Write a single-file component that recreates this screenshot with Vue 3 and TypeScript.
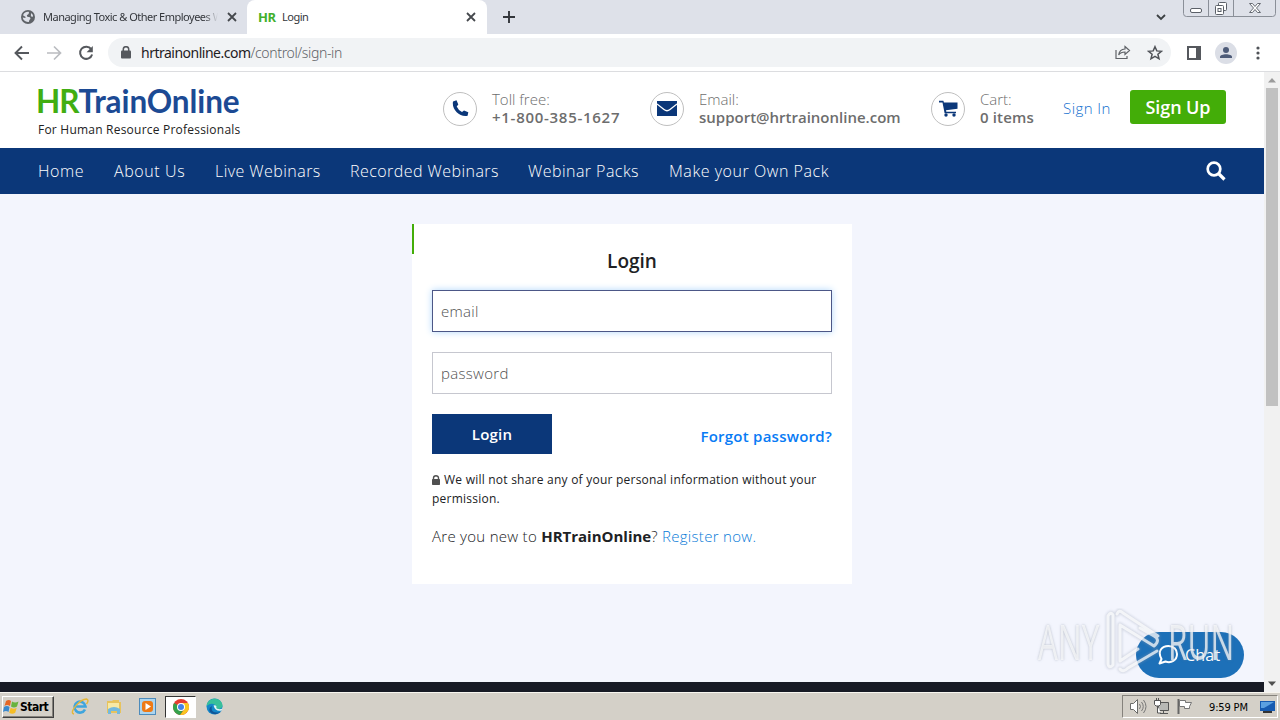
<script setup lang="ts">
const navItems: { label: string; width: string }[] = [
  { label: 'Home', width: 'w-home' },
  { label: 'About Us', width: 'w-about' },
  { label: 'Live Webinars', width: 'w-live' },
  { label: 'Recorded Webinars', width: 'w-recorded' },
  { label: 'Webinar Packs', width: 'w-packs' },
  { label: 'Make your Own Pack', width: 'w-make' },
]
</script>

<template>
  <div class="screen">
    <div class="tabstrip">
      <div class="tab tab-idle">
        <svg class="globe" width="14" height="14" viewBox="0 0 14 14">
          <circle cx="7" cy="7" r="7" fill="#5f6368" />
          <path d="M2 5.2c1.2-2.8 4-3.7 6-3.2L7.6 4 5.8 5.2 6.3 6.8 9 7.2 9.5 8.8 8.4 10l-.6 2C4.3 12.400 2 10 1.700 7.600l2.500.500.500-1zM10 3l2 2-.300 2-1.800-.800z" fill="#dee1e9" />
        </svg>
        <span class="tab-title idle-title">Managing Toxic &amp; Other Employees W</span>
        <svg width="10" height="10" viewBox="0 0 10 10"><path d="M1 1l8 8M9 1L1 9" stroke="#45484d" stroke-width="1.800" /></svg>
      </div>
      <div class="tab tab-active">
        <b class="hr-icon">HR</b>
        <span class="tab-title active-title">Login</span>
        <svg width="10" height="10" viewBox="0 0 10 10"><path d="M1 1l8 8M9 1L1 9" stroke="#45484d" stroke-width="1.800" /></svg>
      </div>
      <svg class="plus" width="12" height="12" viewBox="0 0 12 12"><path d="M6 0v12M0 6h12" stroke="#33363b" stroke-width="1.900" /></svg>
      <svg class="chevron" width="10" height="7" viewBox="0 0 10 7"><path d="M1 1l4 4 4-4" fill="none" stroke="#3c4043" stroke-width="1.800" /></svg>
      <svg class="winctl" width="94" height="18" viewBox="0 0 94 18" fill="none">
        <path d="M.5 0v13.500q0 3 3 3h86q3 0 3-3V0M25.500 0v16M50.500 0v16" stroke="#8a8f98" />
        <rect x="7.500" y="8.500" width="11" height="4" rx="1.500" fill="#fff" stroke="#5b6068" />
        <rect x="35.500" y="2.500" width="8" height="8" rx="1" fill="#fff" stroke="#5b6068" />
        <rect x="32.500" y="5.500" width="8" height="9" rx="1" fill="#fff" stroke="#5b6068" />
        <rect x="35" y="8.500" width="3" height="3" stroke="#5b6068" />
        <path d="M66.500 3.500h3l2.500 3 2.500-3h3l-4 4.500 4 4.500h-3l-2.500-3-2.500 3h-3l4-4.500z" fill="#fff" stroke="#666b73" />
      </svg>
    </div>

    <div class="toolbar">
      <svg width="16" height="16" viewBox="0 0 16 16"><path d="M15 8H2.200M8 1.500L1.500 8 8 14.500" fill="none" stroke="#55585d" stroke-width="1.900" /></svg>
      <svg width="16" height="16" viewBox="0 0 16 16"><path d="M1 8h12.800M8 1.500L14.500 8 8 14.500" fill="none" stroke="#babcc0" stroke-width="1.700" /></svg>
      <svg width="16" height="16" viewBox="0 0 16 16"><path d="M13.200 4.200A6.100 6.100 0 1 0 14.100 9.400" fill="none" stroke="#55585d" stroke-width="2" /><path d="M14.800 1v6.200H8.600z" fill="#55585d" /></svg>
      <div class="omnibox">
        <svg width="10" height="13" viewBox="0 0 10 13"><rect y="4.500" width="10" height="8" rx="1" fill="#55585d" /><path d="M2.300 5V3.200a2.700 2.500 0 0 1 5.400 0V5" fill="none" stroke="#55585d" stroke-width="1.500" /></svg>
        <span class="url"><span class="host">hrtrainonline.com</span>/control/sign-in</span>
        <svg class="share" width="16" height="15" viewBox="0 0 16 15" fill="none" stroke="#606368" stroke-width="1.200"><path d="M1 5v8.500h11V11" /><path d="M10 1.500l4.500 4L10 9.500V7C7 7 5 8 3.700 10 4.200 6 6.500 4.200 10 4z" /></svg>
        <svg width="16" height="16" viewBox="0 0 16 16"><path d="M8 1.700l1.800 4.200 4.600.4-3.500 3 1.100 4.500L8 11.400l-4 2.400 1.100-4.500-3.500-3 4.600-.4z" fill="none" stroke="#505358" stroke-width="1.500" /></svg>
      </div>
      <svg class="panel" width="14" height="14" viewBox="0 0 14 14"><rect x="1" y="1" width="12" height="12" fill="#fff" stroke="#55585d" stroke-width="2" /><path d="M9 1h4v12H9z" fill="#55585d" /></svg>
      <svg class="avatar" width="22" height="22" viewBox="0 0 22 22"><circle cx="11" cy="11" r="11" fill="#dbdee6" /><circle cx="11" cy="8" r="3" fill="#4d5b78" /><path d="M5 16v-1c0-3.600 12-3.600 12 0v1z" fill="#4d5b78" /></svg>
      <svg class="dots" width="4" height="14" viewBox="0 0 4 14" fill="#505358"><circle cx="2" cy="2" r="1.600" /><circle cx="2" cy="7" r="1.600" /><circle cx="2" cy="12" r="1.600" /></svg>
    </div>

    <div class="viewport">
      <div class="page">
        <header class="site-header">
          <div class="brand">
            <div class="wordmark"><span class="green">HR</span>TrainOnline</div>
            <div class="tagline">For Human Resource Professionals</div>
          </div>
          <div class="contact phone">
            <div class="ring"><svg width="17" height="17" viewBox="0 0 17 17"><path d="M1 1.500L4.500.2 6.300 4.500 4.700 6.500Q6.500 10.500 10 12.100l2-1.600 4.300 1.800-.7 3.400C8 17.500-.5 9.500 1 1.500z" fill="#0b3779" /></svg></div>
            <div class="lines"><span class="l-toll">Toll free:</span><b class="b-phone">+1-800-385-1627</b></div>
          </div>
          <div class="contact mail">
            <div class="ring"><svg width="20" height="15" viewBox="0 0 20 15"><path d="M0 0h20v15H0z" fill="#0b3779" /><path d="M0 3l7 5.500q3 2.500 6 0L20 3" fill="none" stroke="#fff" stroke-width="1.300" /></svg></div>
            <div class="lines"><span class="l-email">Email:</span><b class="b-email">support@hrtrainonline.com</b></div>
          </div>
          <div class="contact cart">
            <div class="ring"><svg width="19" height="17" viewBox="0 0 19 17"><path d="M0 .8h4.400l.5 1.700H18.500v6.200L7 10.200l.3 1.500H17v1.600H5.600L3.500 2.500H0z" fill="#0b3779" /><circle cx="7" cy="15" r="1.700" fill="#0b3779" /><circle cx="15" cy="15" r="1.700" fill="#0b3779" /></svg></div>
            <div class="lines"><span class="l-cart">Cart:</span><b class="b-cart">0 items</b></div>
          </div>
          <a class="signin">Sign In</a>
          <button class="signup">Sign Up</button>
        </header>

        <nav class="site-nav">
          <a v-for="item in navItems" :key="item.label" :class="item.width">{{ item.label }}</a>
          <svg class="search" width="20" height="20" viewBox="0 0 20 20" fill="none" stroke="#fff"><circle cx="8" cy="8" r="6.300" stroke-width="2.700" /><path d="M12.500 12.500l6 6" stroke-width="3.200" /></svg>
        </nav>

        <main class="content">
          <form class="card" @submit.prevent>
            <h1>Login</h1>
            <div class="field focused">email</div>
            <div class="field"><span class="ph-password">password</span></div>
            <div class="actions">
              <button class="login" type="submit">Login</button>
              <a class="forgot">Forgot password?</a>
            </div>
            <p class="privacy">
              <svg width="8" height="10" viewBox="0 0 8 10"><rect y="4" width="8" height="6" rx=".7" fill="#505050" /><path d="M1.500 5V3a2.500 2.300 0 0 1 5 0v2" fill="none" stroke="#505050" stroke-width="1.400" /></svg>
              <span class="priv-1">We will not share any of your personal information without your</span><br><span class="priv-2">permission.</span>
            </p>
            <p class="register"><span class="r1">Are you new to </span><b>HRTrainOnline</b><span class="r1">? </span><a>Register now.</a></p>
          </form>
        </main>
        <div class="footer"></div>
      </div>
      <div class="scrollbar">
        <svg width="16" height="16" viewBox="0 0 16 16"><path d="M4 10.500l4-4.500 4 4.500z" fill="#9b9b9b" /></svg>
        <div class="thumb"></div>
        <svg class="sb-down" width="16" height="16" viewBox="0 0 16 16"><path d="M4 5.500h8L8 10z" fill="#505050" /></svg>
      </div>
    </div>

    <div class="chat">
      <svg width="20" height="20" viewBox="0 0 20 20" fill="none" stroke="#fff" stroke-width="2"><path d="M1.500 18.500l2-4.500C-1 6 4 1 10.500 1c5 0 8.500 3.500 8.500 8 0 6.500-6 9.500-11.500 7.500z" stroke-linejoin="round" /></svg>
      <span>Chat</span>
    </div>

    <div class="watermark">
      <span class="any">ANY</span>
      <svg width="62" height="66" viewBox="0 0 62 66" fill="none" stroke-linejoin="round" stroke-linecap="round">
        <g class="mark-halo" stroke="#8f99ac" stroke-opacity=".3" stroke-width="5"><path d="M5 8v48q1 5 5 1V7q-2-4-5 1M14 6q2-5 6-1l35 23M17 17v36l18-12M17 17l34 21q7-6 0-10L37 20M17 61q3 4 8-1l29-17" /></g>
        <g stroke="#fff" stroke-opacity=".72" stroke-width="3"><path d="M5 8v48q1 5 5 1V7q-2-4-5 1M14 6q2-5 6-1l35 23M17 17v36l18-12M17 17l34 21q7-6 0-10L37 20M17 61q3 4 8-1l29-17" /></g>
      </svg>
      <span class="run">RUN</span>
    </div>

    <div class="taskbar">
      <div class="start">
        <svg width="17" height="16" viewBox="0 0 17 16"><path d="M3 2q3-2 5 0L7 7Q4 5 1.500 7z" fill="#e56726" /><path d="M9 2.500q3 2 6.500 0L14 7.500q-3 2-6 0z" fill="#67b33e" /><path d="M1 8q3-2 5.500 0L5.500 13Q3 11 0 13z" fill="#3989ce" /><path d="M7.700 8.700q3 2 6 0l-1.500 5q-3 2-6 0z" fill="#f5bd26" /></svg>
        <b>Start</b>
      </div>
      <svg class="ie" width="18" height="18" viewBox="0 0 18 18" fill="none"><path d="M14 11.500A5.500 5.500 0 1 1 14.500 8.500H5" stroke="#3fa5dd" stroke-width="2.600" /><path d="M3 16C-3 15 9 1 15.500 1q3 1 0 5" stroke="#e5b638" stroke-width="1.400" /></svg>
      <svg class="explorer" width="18" height="18" viewBox="0 0 18 18"><path d="M2 3h5l1-1h6v2h2v11H2z" fill="#e7c35d" /><path d="M3 5h11v7H3z" fill="#f7e9a5" /><path d="M3 11q6-4 12 0v5h-3v-3H6v3H3z" fill="#74b9dd" /></svg>
      <svg class="player" width="17" height="17" viewBox="0 0 17 17"><rect x=".5" y=".5" width="16" height="16" fill="#acd5ef" stroke="#4d8bbb" /><rect x="3" y="3" width="11" height="11" rx="3" fill="#ee7a16" /><path d="M6.500 5v7l5.500-3.500z" fill="#fff" /></svg>
      <div class="task-active">
        <svg width="16" height="16" viewBox="0 0 16 16"><circle cx="8" cy="8" r="8" fill="#e43d30" /><path d="M1.100 4A8 8 0 0 0 7 16l4.500-6.500L8 8z" fill="#34a24c" /><path d="M8 4h6.900A8 8 0 0 1 7.200 16L11.500 10z" fill="#f9c620" /><circle cx="8" cy="8" r="4" fill="#fff" /><circle cx="8" cy="8" r="3" fill="#4383e8" /></svg>
      </div>
      <svg class="edge" width="17" height="17" viewBox="0 0 17 17"><circle cx="8.500" cy="8.500" r="8" fill="#1487c9" /><path d="M.6 8C1-1 15-2 16.500 7c.5 4-5 5-7 3q1.500-2-1-3.500Q5 4.500.6 8z" fill="#38bf9b" /><path d="M6 8q-2 7 6 6.500 2 0 4-1.500Q10 19 4 14q-2-4 2-6z" fill="#115597" /><path d="M7.500 7.500q2-1 3 1-1 2 2 2.500 2 .5 4-.5l-1 2q-6 1.500-8-5z" fill="#e4f6f5" /></svg>
      <div class="tray">
        <svg width="18" height="17" viewBox="0 0 18 17" fill="none"><path d="M1.500 5.500h3l4-4v14l-4-4h-3z" fill="#fff" stroke="#6a6a68" /><path d="M10.500 6q2 2.500 0 5M12.500 4q3.500 4.500 0 9M14.500 2q5 6.500 0 13" stroke="#777" /></svg>
        <svg width="17" height="17" viewBox="0 0 17 17" fill="none"><path d="M5.500 4.500h10v8h-10z" fill="#b7b8b5" stroke="#555" /><path d="M10.500 13v2M7 15.500h8" stroke="#555" /><path d="M1.500 2.500h6v4l-1.500 1.500h-3L1.500 6.500zM3.500 0v3M5.500 0v3M4.500 8v7H8" fill="#fff" stroke="#555" /></svg>
        <svg width="17" height="17" viewBox="0 0 17 17"><path d="M2.500 1v15" stroke="#666" stroke-width="2" /><path d="M3.500 2.500h6v2h6l-2 4v2h-5v-2h-5z" fill="#fff" stroke="#777" /></svg>
        <span class="clock">9:59 PM</span>
        <svg width="15" height="12" viewBox="0 0 15 12"><path d="M0 0h15v10H0z" fill="#175bb1" /><path d="M1 1h13L4 7H1z" fill="#5ba0e1" /><path d="M3 11h9" stroke="#333" stroke-width="2" /></svg>
      </div>
    </div>
  </div>
</template>

<style>
html, body { margin: 0; overflow: hidden; }
</style>

<style scoped>
* { box-sizing: border-box; }
.screen { position: relative; width: 1280px; height: 720px; display: flex; flex-direction: column; overflow: hidden; background: #f3f5fd; font-family: "Open Sans", "Noto Sans", sans-serif; }
svg { display: block; flex-shrink: 0; }
b { font-weight: 600; }
.tabstrip { height: 34px; flex-shrink: 0; background: #dee1e9; display: flex; align-items: center; }
.tab { height: 34px; display: flex; align-items: center; font: 11px/14px "Noto Sans", sans-serif; color: #33363b; }
.tab-idle { width: 247px; padding-left: 21px; }
.tab-title { white-space: nowrap; }
.idle-title { width: 175px; margin: 0 9px 0 8px; letter-spacing: -0.5px; -webkit-mask-image: linear-gradient(90deg, #000 92%, transparent); mask-image: linear-gradient(90deg, #000 92%, transparent); }
.tab-active { width: 240px; padding-left: 11px; background: #fff; border-radius: 8px 8px 0 0; }
.hr-icon { width: 24px; color: #43b02a; font: 700 13px "Open Sans", sans-serif; letter-spacing: -0.5px; }
.active-title { width: 184px; letter-spacing: -0.5px; }
.plus { margin-left: 16px; }
.chevron { margin-left: 641px; }
.winctl { margin-left: 17px; align-self: flex-start; }
.toolbar { height: 38px; flex-shrink: 0; background: #fff; border-bottom: 1px solid #dcdde0; display: flex; align-items: center; padding-left: 14px; gap: 16px; }
.omnibox { width: 1063px; height: 29px; margin-left: -2px; border-radius: 15px; background: #f1f3f5; display: flex; align-items: center; padding-left: 13px; }
.url { width: 968px; margin: 0 6px 0 10px; font: 14px/18px "Noto Sans", sans-serif; font-weight: 300; color: #5e6267; letter-spacing: -0.36px; white-space: nowrap; }
.host { color: #1e2023; font-weight: 400; letter-spacing: -0.5px; }
.share { margin-right: 16px; }
.avatar { margin-left: -2px; }
.dots { margin-left: 3px; }
.viewport { height: 620px; display: flex; flex-shrink: 0; }
.page { width: 1264px; display: flex; flex-direction: column; }
.site-header { height: 76px; flex-shrink: 0; background: #fff; padding-left: 38px; display: flex; }
.brand { width: 405px; padding-top: 11px; }
.wordmark { height: 37px; margin-left: -2px; font: 700 31.5px/37px Lato, sans-serif; color: #1c4a94; letter-spacing: -0.1px; white-space: nowrap; }
.green { color: #41ae12; letter-spacing: -1px; }
.tagline { position: relative; top: 1px; font-size: 12px; line-height: 18px; color: #222; letter-spacing: 0.22px; white-space: nowrap; }
.contact { display: flex; padding-top: 20px; color: #6d6d6d; }
.phone { width: 207px; }
.mail { width: 281px; }
.cart { width: 132px; }
.ring { width: 34px; height: 34px; flex-shrink: 0; border: 1px solid #bfbfbf; border-radius: 50%; display: flex; align-items: center; justify-content: center; padding-bottom: 2px; }
.lines { margin-left: 15px; display: flex; flex-direction: column; align-items: flex-start; font-size: 15px; font-weight: 300; line-height: 18px; margin-top: -2px; white-space: nowrap; }
.b-phone { letter-spacing: .72px; }
.b-cart { letter-spacing: .15px; }
.signin { width: 67px; padding-top: 26px; color: #1470cf; font-weight: 300; font-size: 15px; line-height: 20px; letter-spacing: .45px; }
.signup { width: 96px; height: 34px; margin-top: 18px; padding: 0; border: 0; border-radius: 3px; background: #43ad08; color: #fff; font: 600 18px/34px "Open Sans", sans-serif; letter-spacing: -.1px; }
.site-nav { height: 46px; flex-shrink: 0; padding-left: 38px; background: #0b3779; color: #fff; display: flex; align-items: center; font-size: 16px; font-weight: 300; white-space: nowrap; letter-spacing: .45px; }
.w-home { width: 76px; letter-spacing: .6px; }
.w-about { width: 101px; letter-spacing: .6px; }
.w-live { width: 135px; }
.w-recorded { width: 178px; }
.w-packs { width: 141px; }
.w-make { width: 537px; letter-spacing: .55px; }
.content { height: 488px; padding: 30px 0 0 412px; }
.card { position: relative; width: 440px; height: 360px; padding: 22px 20px 0; background: #fff; }
.card::before { content: ""; position: absolute; left: 0; top: 0; width: 2px; height: 30px; background: #43ad08; }
h1 { margin: 0 0 14px; height: 30px; text-align: center; font-size: 19px; line-height: 30px; font-weight: 600; color: #202124; }
.field { height: 42px; margin-bottom: 20px; padding-left: 8px; border: 1px solid #c6c7cf; font-size: 15px; line-height: 41px; font-weight: 300; color: #505050; letter-spacing: .3px; }
.focused { border-color: #4c5787; box-shadow: 0 0 7px #b1d7fb; }
.actions { display: flex; justify-content: space-between; }
.login { width: 120px; height: 40px; border: 0; padding: 0; color: #fff; background: #0b3779; font: 600 15px/40px "Open Sans", sans-serif; letter-spacing: .2px; }
.forgot { color: #087bf5; font-size: 15px; line-height: 45px; font-weight: 600; height: 40px; letter-spacing: .25px; }
.privacy { margin: 16px 0 19px; font-size: 12px; line-height: 19px; color: #202124; white-space: nowrap; letter-spacing: .23px; }
.privacy svg { display: inline-block; vertical-align: -1px; margin-right: 4px; }
.register { position: relative; top: -1px; margin: 0; font-size: 15px; line-height: 20px; font-weight: 300; color: #202124; white-space: pre; letter-spacing: .28px; }
.register b { font-weight: 700; letter-spacing: 0; }
.register a { color: #087bd8; letter-spacing: .3px; }
.footer { height: 10px; background: #171a25; }
.scrollbar { width: 16px; background: #f1f1f1; display: flex; flex-direction: column; }
.thumb { width: 12px; height: 318px; margin-left: 2px; background: #c1c1c1; }
.sb-down { margin-top: auto; }
.chat { position: absolute; left: 1136px; top: 632px; width: 108px; height: 46px; padding-left: 22px; border-radius: 23px; background: #1d70b8; color: #fff; display: flex; align-items: center; gap: 7px; font-size: 16px; letter-spacing: .2px; }
.watermark { position: absolute; left: 1038px; top: 608px; height: 66px; display: flex; align-items: center; color: #ffffffb8; text-shadow: 0 0 3px #7d889a90; font: 50px/66px "Open Sans", sans-serif; }
.mark-halo { filter: blur(1px); }
.any, .run { transform: scaleX(.63); transform-origin: left; }
.any { width: 65px; }
.run { width: 66px; margin-left: 3px; }
.taskbar { height: 28px; margin-top: auto; background: #d4d0c8; border-top: 1px solid #f7f5ef; display: flex; align-items: center; padding-left: 2px; }
.start { width: 52px; height: 22px; border: 1px solid; border-color: #fff #404040 #404040 #fff; box-shadow: inset -1px -1px #85827c; display: flex; align-items: center; padding-left: 0; color: #000; font: 700 12px "DejaVu Sans Condensed", "DejaVu Sans", sans-serif; }
.start b { font-weight: 700; letter-spacing: -.5px; }
.ie { margin-left: 17px; }
.explorer { margin-left: 16px; }
.player { margin-left: 16px; }
.task-active { width: 31px; height: 22px; margin-left: 9px; border: 1px solid; border-color: #333 #fff #fff #333; background: #fff; display: flex; align-items: center; justify-content: center; }
.edge { margin-left: 10px; }
.tray { width: 156px; height: 23px; margin-left: auto; margin-right: 2px; border: 1px solid; border-color: #85827c #fff #fff #85827c; display: flex; align-items: center; padding-left: 6px; gap: 6px; }
.clock { width: 41px; margin: 1px 4px 0 10px; color: #000; font: 11px "DejaVu Sans Condensed", sans-serif; letter-spacing: -.15px; white-space: nowrap; }
</style>
